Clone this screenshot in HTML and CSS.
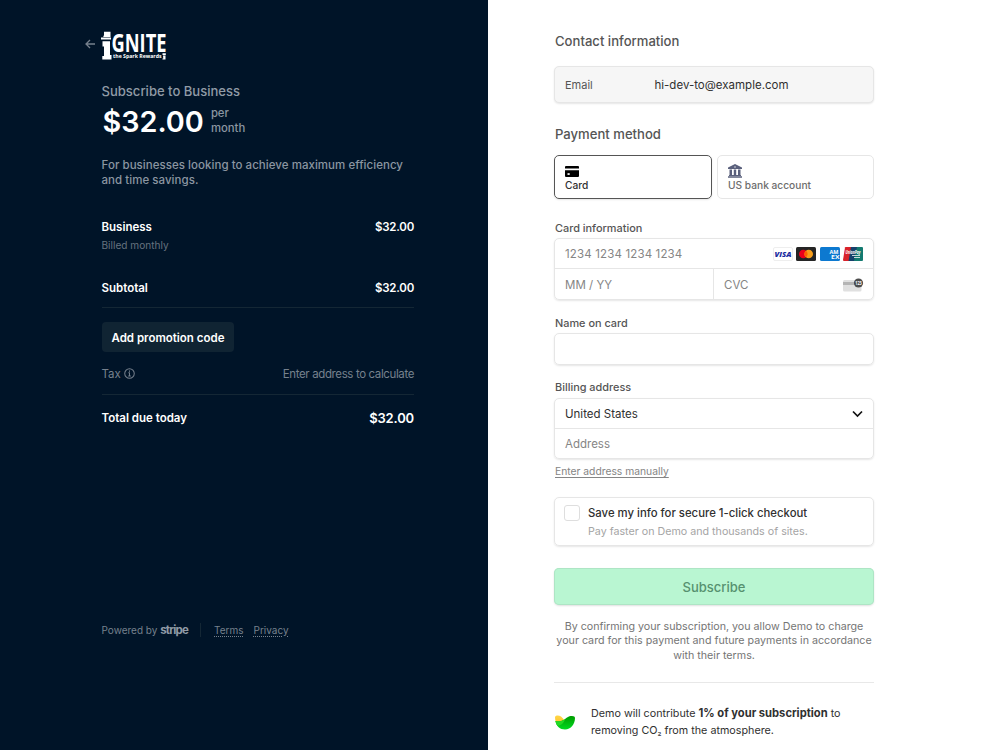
FILE: index.html
```html
<!DOCTYPE html>
<html lang="en">
<head>
    <meta charset="UTF-8">
    <meta name="viewport" content="width=device-width, initial-scale=1.0">
    <title>Subscribe to Business</title>
    <link rel="stylesheet" href="styles.css">
</head>
<body>
    <main class="checkout">
        <section class="summary">
            <header class="brand">
                <svg class="back" viewBox="0 0 11 10" width="11" height="10" fill="none" stroke="#76818d" stroke-width="1.3">
                    <path d="M10 5H1.200M5 1 1 5l4 4"/>
                </svg>
                <svg class="logo" viewBox="0 0 66 30" width="66" height="30" fill="#fff">
                    <path d="M3 .8h6.500v5.200H2.200L3 4zM0 6.500h10v2H0zM1.500 10.200H9V24h1.500v4.500H1.300V25H3V15.500H1.500z"/>
                    <text class="logo-name" x="10.500" y="21.300" textLength="55" lengthAdjust="spacingAndGlyphs">GNITE</text>
                    <text class="logo-tag" x="12" y="27.300" textLength="48.500" lengthAdjust="spacingAndGlyphs">the Spark Rewards</text>
                    <path d="M61.500 22.300h3.300v1.600h-3.300zM62 24.600h2.500V28.500h-3v-1h.8z"/>
                </svg>
            </header>
            <h1 class="plan">Subscribe to Business</h1>
            <div class="price">
                <span class="amount">$32.00</span>
                <span class="period">per<br>month</span>
            </div>
            <p class="description">For businesses looking to achieve maximum efficiency<br>and time savings.</p>
            <div class="row item"><span>Business</span><span class="cost">$32.00</span></div>
            <p class="billed">Billed monthly</p>
            <div class="row subtotal"><span>Subtotal</span><span class="cost">$32.00</span></div>
            <button class="promo">Add promotion code</button>
            <div class="row tax">
                <span class="tax-label">Tax
                    <svg viewBox="0 0 12 12" width="11" height="11" fill="none" stroke="#76818d" stroke-width="1.1">
                        <circle cx="6" cy="6" r="5.200"/>
                        <path d="M6 5v4M4.800 5.300H6M4.600 8.800h2.800M6 2.800v1.200"/>
                    </svg>
                </span>
                <span class="tax-note">Enter address to calculate</span>
            </div>
            <div class="row total"><span>Total due today</span><span class="total-price">$32.00</span></div>
            <footer class="footer">
                <span>Powered by <b class="stripe">stripe</b></span>
                <span class="divider"></span>
                <a>Terms</a>
                <a>Privacy</a>
            </footer>
        </section>

        <form class="payment">
            <h2>Contact information</h2>
            <div class="box email">
                <span class="email-label">Email</span>
                <span>hi-dev-to@example.com</span>
            </div>

            <h2 class="method-title">Payment method</h2>
            <div class="methods">
                <div class="method active">
                    <svg viewBox="0 0 14 11" width="14" height="11">
                        <path d="M0 1q0-1 1-1h12q1 0 1 1v1.500H0zM0 4.200h14V10q0 1-1 1H1q-1 0-1-1z"/>
                        <path d="M2.500 7.200h2.200v1.700H2.500z" fill="#fff"/>
                    </svg>
                    <span>Card</span>
                </div>
                <div class="method">
                    <svg class="bank" viewBox="0 0 14 14" width="14" height="14" fill="#5a607c">
                        <path d="M7 0 14 3.500V5H0V3.500zM1.500 5.500H4V11H1.500zM5.800 5.500h2.400V11H5.800zM10 5.500h2.500V11H10zM1 11h12v1H1zM0 12.300h14V13.800H0z"/>
                        <circle cx="7" cy="3" r=".7" fill="#fff"/>
                    </svg>
                    <span>US bank account</span>
                </div>
            </div>

            <label class="label card-title">Card information</label>
            <div class="box card">
                <div class="field top">
                    <span class="card-number">1234 1234 1234 1234</span>
                    <span class="brands">
                        <svg viewBox="0 0 20 14" width="20" height="14">
                            <rect x=".5" y=".5" width="19" height="13" rx="1.500" fill="#fff" stroke="#eee"/>
                            <text class="visa" x="1.500" y="9.800" textLength="17" lengthAdjust="spacingAndGlyphs">VISA</text>
                        </svg>
                        <svg viewBox="0 0 20 14" width="20" height="14">
                            <rect width="20" height="14" rx="1.500" fill="#252525"/>
                            <circle cx="7.300" cy="7" r="4.300" fill="#eb001b"/>
                            <circle cx="12.700" cy="7" r="4.300" fill="#f79e1b"/>
                            <path d="M10 3.650a4.300 4.300 0 0 1 0 6.700 4.300 4.300 0 0 1 0-6.700" fill="#ff5f00"/>
                        </svg>
                        <svg viewBox="0 0 20 14" width="20" height="14">
                            <rect width="20" height="14" rx="1.500" fill="#0d79d0"/>
                            <text class="amex" x="9.500" y="6.600" textLength="9" lengthAdjust="spacingAndGlyphs">AM</text>
                            <text class="amex" x="11" y="11.600" textLength="8.500" lengthAdjust="spacingAndGlyphs">EX</text>
                        </svg>
                        <svg viewBox="0 0 20 14" width="20" height="14">
                            <path d="M2.500 0H9L6.500 14H1Q0 14 0 13L2 .5z" fill="#d9222a"/>
                            <path d="M8 0h7l-3 14H5.500z" fill="#16416c"/>
                            <path d="M14 0h5q1 0 1 1v12q0 1-1 1h-8z" fill="#137a70"/>
                            <text class="union" x="2.500" y="6.500" textLength="15" lengthAdjust="spacingAndGlyphs">UnionPay</text>
                            <path d="M9 8.500h8M11 10.500h6" stroke="#c5d8da" stroke-width="1.2"/>
                        </svg>
                    </span>
                </div>
                <div class="halves">
                    <div class="field">MM / YY</div>
                    <div class="field cvc">CVC
                        <svg viewBox="0 0 21 14" width="21" height="14">
                            <rect x="1" y="2" width="18.500" height="11.500" rx="1.500" fill="#e0e0e0"/>
                            <path d="M1 4h18.500v3H1z" fill="#b5b5b5"/>
                            <circle cx="16.500" cy="5" r="4.600" fill="#4c4c4c"/>
                            <text class="digits" x="13.200" y="6.600" textLength="6.600" lengthAdjust="spacingAndGlyphs">123</text>
                        </svg>
                    </div>
                </div>
            </div>

            <label class="label name-title">Name on card</label>
            <div class="box name"></div>

            <label class="label billing-title">Billing address</label>
            <div class="box billing">
                <div class="field top">United States
                    <svg viewBox="0 0 11 8" width="11" height="8" fill="none" stroke="#111" stroke-width="1.7">
                        <path d="M1 1.500 5.500 6 10 1.500"/>
                    </svg>
                </div>
                <div class="field address">Address</div>
            </div>
            <a class="manual">Enter address manually</a>

            <div class="box save">
                <span class="checkbox"></span>
                <div>
                    <p class="save-title">Save my info for secure 1-click checkout</p>
                    <p class="save-note">Pay faster on Demo and thousands of sites.</p>
                </div>
            </div>

            <button class="subscribe">Subscribe</button>
            <p class="consent">By confirming your subscription, you allow Demo to charge<br>your card for this payment and future payments in accordance<br>with their terms.</p>

            <div class="climate">
                <svg viewBox="0 0 20 15" width="20" height="15">
                    <defs>
                        <linearGradient id="leaf" x1="0" x2="0" y1="0" y2="1">
                            <stop offset="0" stop-color="#009c00"/>
                            <stop offset="1" stop-color="#00db20"/>
                        </linearGradient>
                        <linearGradient id="sun" x1="0" x2="0" y1="0" y2="1">
                            <stop offset="0" stop-color="#ffd748"/>
                            <stop offset="1" stop-color="#ffc02a"/>
                        </linearGradient>
                    </defs>
                    <path d="M0 2.500C0 0 4 0 6 1.500 8 3 8.500 5 10 5L8 9 1 7Q0 5 0 2.500" fill="url(#sun)"/>
                    <path d="M.4 6C4 6.500 6 6.500 8.500 5 12 3 13 1 17 1q3 0 3 2C20 9 16 14.500 10 14.500 5 14.500 1.300 11 .4 6" fill="url(#leaf)"/>
                    <path d="M.4 6C4 6.500 6 6.500 8.500 5L10 4.500Q8 10 2.500 11 1 9 .4 6" fill="#22d824"/>
                </svg>
                <p>Demo will contribute <b>1% of your subscription</b> to<br>removing CO<span class="sub">₂</span> from the atmosphere.</p>
            </div>
        </form>
    </main>
</body>
</html>
```
FILE: styles.css
```css
* {
    box-sizing: border-box;
}

body {
    margin: 0;
    font-family: Inter, "Liberation Sans", sans-serif;
    font-size: 11.5px;
    color: #303030;
    background: #fff;
}

h1, h2, p {
    margin: 0;
    font-weight: 500;
    white-space: nowrap;
}

svg {
    display: block;
    flex: none;
    overflow: visible;
}

button {
    font-family: inherit;
    border: 0;
}

.checkout {
    display: grid;
    grid-template-columns: 488px 1fr;
    height: 750px;
    overflow: hidden;
}

/* Order summary */
.summary {
    padding: 31px 74px 0 101.5px;
    background: #001428;
    color: #fff;
}

.brand {
    display: flex;
    align-items: center;
    gap: 5px;
    height: 30px;
    margin-left: -17px;
}

.back {
    margin-top: -4px;
}

.logo-name {
    font: 700 25px "Open Sans", sans-serif;
}

.logo-tag {
    font: 700 5.5px "Open Sans", sans-serif;
}

.plan {
    margin-top: 22px;
    font-size: 13.05px;
    line-height: 16px;
    color: #909ba6;
}

.price {
    display: flex;
    align-items: center;
    gap: 7px;
    height: 32px;
    margin-top: 6px;
}

.amount {
    padding-left: 1px;
    font-size: 28.8px;
    font-weight: 600;
}

.period {
    font-size: 11.3px;
    font-weight: 500;
    line-height: 15px;
    color: #8b96a1;
}

.description {
    margin-top: 20.5px;
    font-size: 11.5px;
    line-height: 15.5px;
    letter-spacing: 0.04px;
    color: #8b96a1;
}

.row {
    display: flex;
    justify-content: space-between;
    align-items: center;
    font-weight: 600;
}

.item {
    height: 16px;
    margin-top: 30px;
}

.cost {
    letter-spacing: -0.25px;
}

.billed {
    margin-top: 3.5px;
    font-size: 10.1px;
    line-height: 14px;
    font-weight: 400;
    color: #66727f;
}

.subtotal {
    height: 29px;
    margin-top: 27px;
    padding-bottom: 11px;
    border-bottom: 1px solid #142735;
}

.promo {
    height: 30px;
    margin-top: 14px;
    padding: 1px 10px 0;
    border-radius: 4px;
    background: #102433;
    color: #fff;
    font-size: 11.5px;
    font-weight: 600;
}

.tax {
    height: 43px;
    padding-top: 1px;
    font-weight: 400;
    color: #76818d;
    border-bottom: 1px solid #142735;
}

.tax-label {
    display: flex;
    align-items: center;
    gap: 3px;
}

.tax-note {
    letter-spacing: -0.38px;
}

.total {
    height: 46px;
}

.total-price {
    font-size: 13px;
    letter-spacing: -0.15px;
}

.footer {
    display: flex;
    align-items: center;
    gap: 10px;
    margin-top: 182px;
    font-size: 10px;
    line-height: 14px;
    color: #76818d;
}

.footer a {
    text-decoration: underline dotted;
    text-underline-offset: 2px;
}

.divider {
    width: 1px;
    height: 14px;
    margin: 0 3px 0 2px;
    background: #142735;
}

.stripe {
    font-size: 11.5px;
    letter-spacing: -0.8px;
    color: #909ba6;
}

/* Payment form */
.payment {
    display: flex;
    flex-direction: column;
    width: 320px;
    margin-left: 66px;
    padding-top: 33px;
}

h2 {
    padding-left: 1px;
    font-size: 13.1px;
    line-height: 16px;
    color: #555;
}

.box {
    border: 1px solid #e6e6e6;
    border-radius: 5px;
    box-shadow: 0 1px 2px #0000001a;
}

.email {
    display: flex;
    align-items: center;
    height: 37px;
    margin-top: 17px;
    padding: 0 10px;
    background: #f6f6f6;
}

.email-label {
    width: 89.5px;
    font-size: 11px;
    color: #555;
}

.method-title {
    margin-top: 23px;
}

.methods {
    display: grid;
    grid-template-columns: 158px 157px;
    gap: 5px;
    margin-top: 13px;
}

.method {
    display: flex;
    flex-direction: column;
    justify-content: space-between;
    height: 44px;
    padding: 10px 10px 6px;
    border: 1px solid #e6e6e6;
    border-radius: 5px;
    font-size: 10.2px;
    line-height: 13px;
    font-weight: 500;
    color: #6d6d6d;
}

.method.active {
    border-color: #555;
    color: #303030;
    box-shadow: 0 1px 2px #0000001a;
}

.bank {
    margin-top: -2px;
}

.label {
    padding-left: 1px;
    font-size: 10.9px;
    line-height: 14px;
    font-weight: 500;
    color: #555;
}

.card-title {
    margin-top: 22px;
}

.card {
    margin-top: 3px;
    color: #858585;
}

.field {
    display: flex;
    align-items: center;
    justify-content: space-between;
    height: 30px;
    padding: 1px 10px 0;
}

.top {
    height: 29px;
}

.card-number {
    letter-spacing: 0.15px;
}

.brands {
    display: flex;
    gap: 3.5px;
}

.visa {
    font: italic 800 7.5px "Open Sans", sans-serif;
    fill: #1a2ba0;
}

.amex {
    font: 700 5px "Open Sans", sans-serif;
    fill: #fff;
}

.union {
    font: italic 700 4.5px "Open Sans", sans-serif;
    fill: #fff;
}

.digits {
    font: 700 4.5px "Open Sans", sans-serif;
    fill: #fff;
}

.halves {
    display: grid;
    grid-template-columns: 158px 1fr;
    border-top: 1px solid #e6e6e6;
}

.cvc {
    border-left: 1px solid #e6e6e6;
}

.name-title {
    margin-top: 16px;
}

.name {
    height: 32px;
    margin-top: 3px;
}

.billing-title {
    margin-top: 15px;
}

.billing {
    margin-top: 4px;
}

.address {
    padding-top: 0;
    border-top: 1px solid #e6e6e6;
    color: #858585;
}

.manual {
    align-self: flex-start;
    margin-top: 5px;
    padding-left: 1px;
    font-size: 10.3px;
    line-height: 15px;
    color: #858585;
    text-decoration: underline;
    text-underline-offset: 1.5px;
}

.save {
    display: flex;
    gap: 8px;
    height: 49px;
    margin-top: 18px;
    padding: 7px 9px 0;
}

.checkbox {
    width: 16px;
    height: 16px;
    border: 1px solid #dedede;
    border-radius: 3px;
}

.save-title {
    font-size: 11.35px;
    line-height: 17px;
}

.save-note {
    margin-top: 2px;
    font-size: 10.7px;
    line-height: 15px;
    font-weight: 400;
    color: #a5a5a5;
}

.subscribe {
    height: 37px;
    margin-top: 22px;
    border-radius: 5px;
    background: #b9f6d2;
    color: #56916f;
    font-size: 13px;
    font-weight: 500;
    box-shadow: inset 0 0 0 1px #aee5c5, 0 1px 2px #00000020;
}

.consent {
    margin-top: 14.5px;
    font-size: 10.7px;
    line-height: 14.5px;
    font-weight: 400;
    text-align: center;
    color: #757575;
}

.climate {
    display: flex;
    align-items: center;
    gap: 16px;
    margin-top: 18.5px;
    padding-top: 22px;
    border-top: 1px solid #e8e8e8;
}

.climate svg {
    margin-left: 1px;
}

.climate p {
    font-size: 10.75px;
    line-height: 17.5px;
    font-weight: 400;
}

.climate b {
    font-size: 11.2px;
}

.sub {
    font-size: 9px;
}
```
